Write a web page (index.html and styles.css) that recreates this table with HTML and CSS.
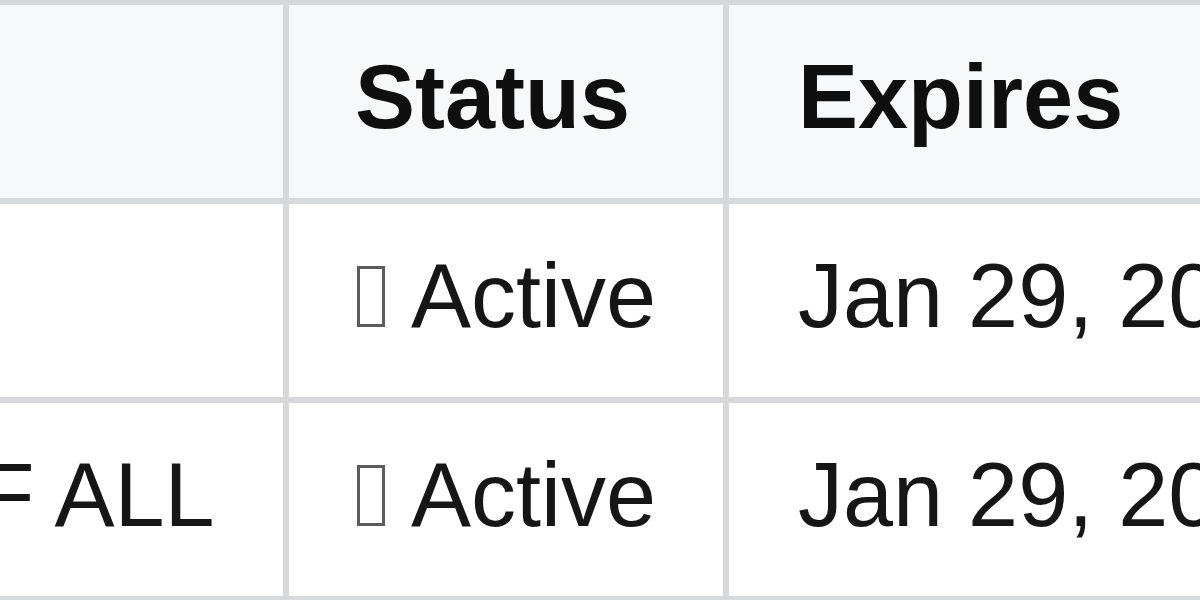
FILE: index.html
```html
<!DOCTYPE html>
<html lang="en">
<head>
<meta charset="utf-8">
<title>Subscriptions</title>
<link rel="stylesheet" href="styles.css">
</head>
<body>
<div class="viewport">
  <div class="table" role="table">
    <div class="cell head" role="columnheader">Plan</div>
    <div class="cell head col-status" role="columnheader">Status</div>
    <div class="cell head col-expires" role="columnheader">Expires</div>

    <div class="cell" role="cell">PRO</div>
    <div class="cell col-status" role="cell"><span class="status-icon"></span>Active</div>
    <div class="cell col-expires" role="cell">Jan 29, 2025</div>

    <div class="cell" role="cell">BEST OF ALL</div>
    <div class="cell col-status" role="cell"><span class="status-icon"></span>Active</div>
    <div class="cell col-expires" role="cell">Jan 29, 2025</div>
  </div>
</div>
</body>
</html>
```

FILE: styles.css
```css
html, body {
  margin: 0;
  padding: 0;
  background: #ffffff;
}

.viewport {
  width: 1200px;
  height: 600px;
  overflow: hidden;
}

.table {
  display: grid;
  grid-template-columns: 702px 440px 1fr;
  width: calc(100% + 413px);
  margin-left: -413px;
  margin-top: -1px;
  border-top: 6px solid #d6d8db;
  font-family: "Liberation Sans", Arial, sans-serif;
  font-size: 90px;
  line-height: 104px;
  color: #161616;
}

.cell {
  box-sizing: border-box;
  height: 199px;
  padding: 40px 60px 49px 64px;
  border-right: 6px solid #d6d8db;
  border-bottom: 6px solid #d6d8db;
  white-space: nowrap;
  background: #ffffff;
}

.cell.col-status {
  padding-left: 66px;
}

.cell.col-expires {
  padding-left: 69px;
}

.cell.head {
  background: #f6f8fa;
  font-weight: bold;
  color: #0f0f0f;
}

.status-icon {
  display: inline-block;
  box-sizing: border-box;
  width: 28px;
  height: 61px;
  margin-left: 2px;
  margin-right: 26px;
  border: 3px solid #5c5c5c;
  vertical-align: baseline;
}
```
